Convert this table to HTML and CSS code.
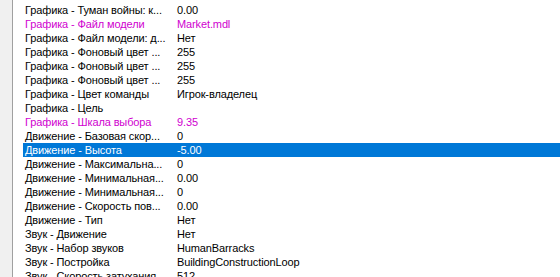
FILE: index.html
```html
<!DOCTYPE html>
<html lang="ru">
<head>
<meta charset="utf-8">
<title>Свойства объекта</title>
<link rel="stylesheet" href="styles.css">
</head>
<body>
<div class="editor">
  <div class="gutter"></div>
  <div class="props">
    <div class="row"><span class="name">Графика - Туман войны: к...</span><span class="value">0.00</span></div>
    <div class="row changed"><span class="name">Графика - Файл модели</span><span class="value">Market.mdl</span></div>
    <div class="row"><span class="name">Графика - Файл модели: д...</span><span class="value">Нет</span></div>
    <div class="row"><span class="name">Графика - Фоновый цвет ...</span><span class="value">255</span></div>
    <div class="row"><span class="name">Графика - Фоновый цвет ...</span><span class="value">255</span></div>
    <div class="row"><span class="name">Графика - Фоновый цвет ...</span><span class="value">255</span></div>
    <div class="row"><span class="name">Графика - Цвет команды</span><span class="value">Игрок-владелец</span></div>
    <div class="row"><span class="name">Графика - Цель</span><span class="value"></span></div>
    <div class="row changed"><span class="name">Графика - Шкала выбора</span><span class="value">9.35</span></div>
    <div class="row"><span class="name">Движение - Базовая скор...</span><span class="value">0</span></div>
    <div class="row selected"><span class="name">Движение - Высота</span><span class="value">-5.00</span></div>
    <div class="row"><span class="name">Движение - Максимальна...</span><span class="value">0</span></div>
    <div class="row"><span class="name">Движение - Минимальная...</span><span class="value">0.00</span></div>
    <div class="row"><span class="name">Движение - Минимальная...</span><span class="value">0</span></div>
    <div class="row"><span class="name">Движение - Скорость пов...</span><span class="value">0.00</span></div>
    <div class="row"><span class="name">Движение - Тип</span><span class="value">Нет</span></div>
    <div class="row"><span class="name">Звук - Движение</span><span class="value">Нет</span></div>
    <div class="row"><span class="name">Звук - Набор звуков</span><span class="value">HumanBarracks</span></div>
    <div class="row"><span class="name">Звук - Постройка</span><span class="value">BuildingConstructionLoop</span></div>
    <div class="row"><span class="name">Звук - Скорость затухания</span><span class="value">512</span></div>
  </div>
</div>
</body>
</html>
```

FILE: styles.css
```css
html, body {
  margin: 0;
  padding: 0;
  background: #ffffff;
  overflow: hidden;
}

.editor {
  display: flex;
  height: 277px;
  font-family: "Liberation Sans", Arial, sans-serif;
  font-size: 11px;
  letter-spacing: -0.12px;
  color: #000000;
}

/* splitter strip on the left edge of the list */
.gutter {
  width: 12px;
  flex: none;
  background: #f0f0f0;
  border-right: 1px solid #a0a0a0;
}

.props {
  flex: 1;
  padding: 3px 0 0 10px;
  overflow: hidden;
}

.row {
  display: flex;
  height: 14px;
  line-height: 15px;
  white-space: nowrap;
}

.name {
  width: 152px;
  flex: none;
  padding-left: 2px;
}

.value {
  flex: 1;
}

/* values that differ from the defaults */
.row.changed {
  color: #d000d0;
}

.row.selected {
  background: #0078d7;
  color: #ffffff;
}
```
